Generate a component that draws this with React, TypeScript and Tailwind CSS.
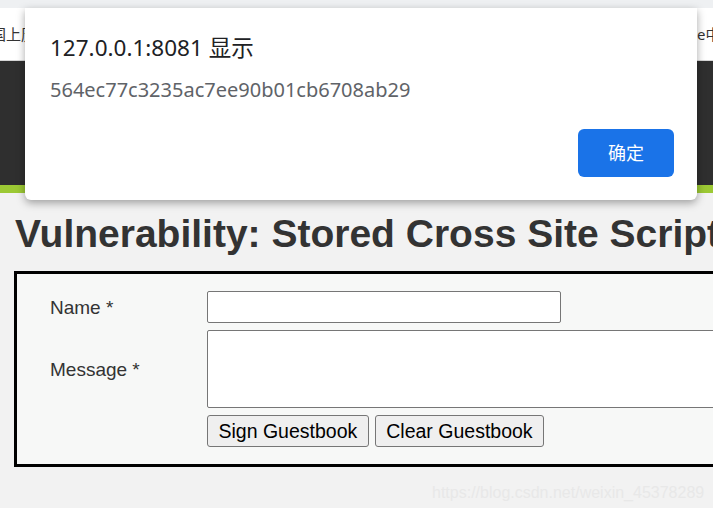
import React from "react";

const pageFont = { fontFamily: '"Liberation Sans", Arial, sans-serif' };
const dialogFont = { fontFamily: '"Noto Sans", "Noto Sans CJK SC", sans-serif' };

function AlertDialog() {
  return (
    <div
      className="absolute left-[25px] top-[8px] w-[672px] h-[192px] bg-white rounded-b-[6px] shadow-[0_3px_8px_rgba(0,0,0,0.35)] px-[25px] pt-[25px]"
      style={dialogFont}
    >
      <div className="text-[22.5px] leading-[30px] text-[#202124]">127.0.0.1:8081 显示</div>
      <div className="mt-[14px] text-[20px] leading-[26px] text-[#5f6368]">
        564ec77c3235ac7ee90b01cb6708ab29
      </div>
      <div className="mt-[26px] flex justify-end">
        <button className="w-[96px] h-[48px] rounded-[6px] bg-[#1a73e8] text-white text-[18px] mr-[-2px]">
          确定
        </button>
      </div>
    </div>
  );
}

export default function App() {
  return (
    <div className="relative w-[713px] h-[508px] overflow-hidden bg-[#f2f2f2]" style={pageFont}>
      <div className="h-[8px] bg-[#eef0f2]" />
      <div
        className="h-[53px] bg-white border-b border-[#d6d6d6] flex items-center overflow-hidden text-[15px] text-[#333]"
        style={dialogFont}
      >
        <div className="w-[697px] shrink-0">
          <span className="ml-[-9px]">国上历史</span>
        </div>
        <span className="whitespace-nowrap">e中文</span>
      </div>
      <div className="h-[124px] bg-[#2f2f2f]" />
      <div className="h-[8px] bg-[#9cc934]" />

      <h1 className="mt-[21px] ml-[15px] text-[39px] leading-none font-bold text-[#333] whitespace-nowrap">
        Vulnerability: Stored Cross Site Scripting (XSS)
      </h1>

      <div className="mt-[18px] ml-[14px] w-[800px] border-[3px] border-black bg-[#f7f8f7] pt-[17px] pb-[17px]">
        <div className="flex flex-col gap-[7px]">
          <div className="flex items-center">
            <div className="w-[190px] pl-[33px] pt-[3px] text-[19px] text-[#333]">Name *</div>
            <input className="w-[354px] h-[32px] bg-white border border-[#767676] rounded-[2px]" />
          </div>
          <div className="flex items-center">
            <div className="w-[190px] pl-[33px] pt-[3px] text-[19px] text-[#333]">Message *</div>
            <textarea className="w-[560px] h-[78px] bg-white border border-[#767676] rounded-[2px] resize-none" />
          </div>
          <div className="flex gap-[6px] pl-[190px]">
            <button className="h-[32px] px-[10.5px] pt-[1px] bg-[#efefef] border border-[#767676] rounded-[3px] text-[19.5px] text-black">
              Sign Guestbook
            </button>
            <button className="h-[32px] px-[10.5px] pt-[1px] bg-[#efefef] border border-[#767676] rounded-[3px] text-[19.5px] text-black">
              Clear Guestbook
            </button>
          </div>
        </div>
      </div>

      <div className="mt-[14px] ml-[432px] text-[16px] text-[#e8e8e8] whitespace-nowrap">
        https://blog.csdn.net/weixin_45378289
      </div>

      <AlertDialog />
    </div>
  );
}
